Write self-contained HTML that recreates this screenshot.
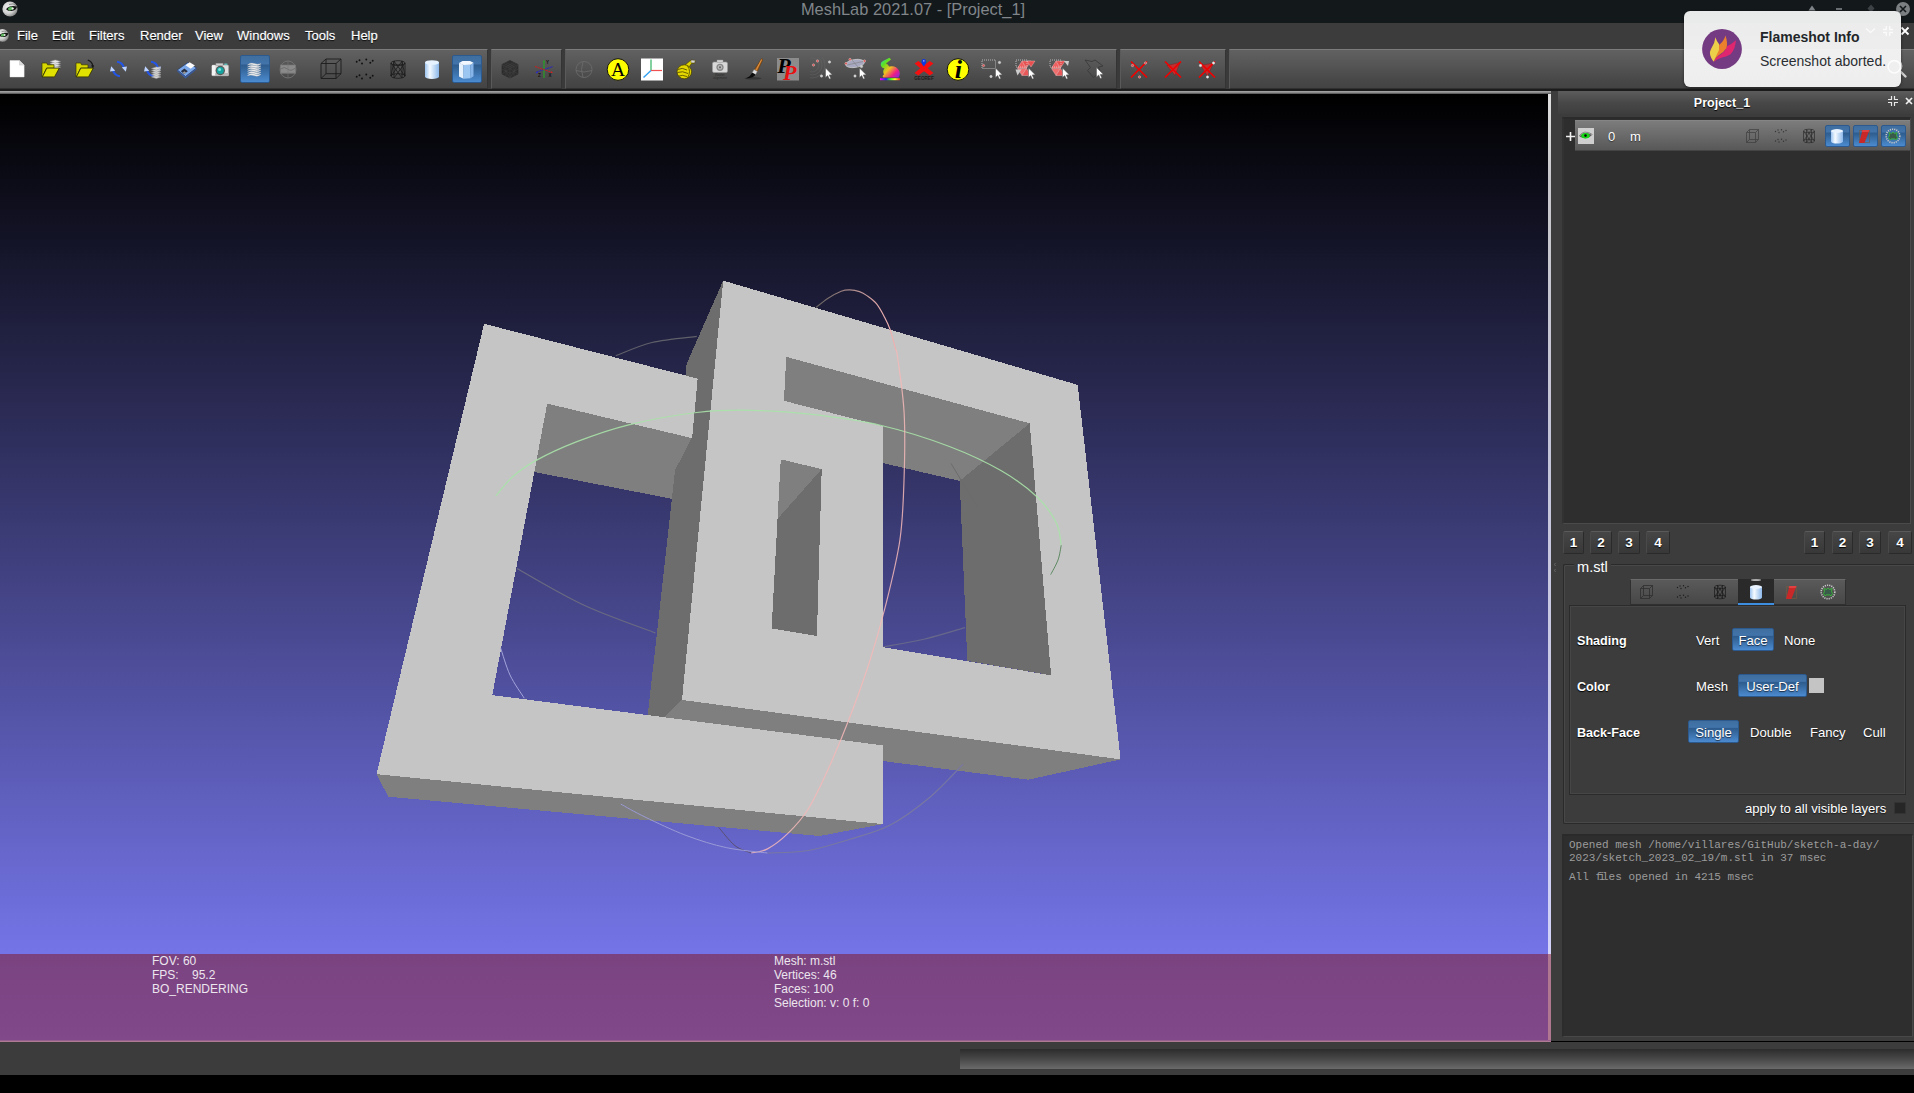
<!DOCTYPE html>
<html lang="en"><head><meta charset="utf-8"><title>MeshLab 2021.07 - [Project_1]</title>
<style>
*{box-sizing:border-box;margin:0;padding:0}
html,body{width:1914px;height:1093px;overflow:hidden;background:#000}
body{position:relative;font-family:"Liberation Sans",sans-serif;font-size:13px;color:#fff}
.abs{position:absolute}
#title{left:0;top:0;width:1914px;height:23px;background:#13181b}
#title .t{position:absolute;left:0;width:1826px;top:0;height:19px;line-height:19px;text-align:center;font-size:16.4px;color:#80868a}
#menu{left:0;top:23px;width:1914px;height:26px;background:#3c3c3c}
#menu span{position:absolute;top:0;height:25px;line-height:25px;font-size:13px;color:#fff;text-shadow:0 1px 1px #000, 0 0 1px #dfe6ee}
#tb{left:0;top:49px;width:1914px;height:40px;background:#3a3a3a}
.tbar{position:absolute;top:0;height:40px;background:linear-gradient(#616161 0,#555 40%,#494949 75%,#434343 100%);border:1px solid #303030;border-top-color:#7c7c7c;border-left-color:#5a5a5a;border-right-color:#343434}
.act{position:absolute;top:6px;width:30px;height:28px;border:1px solid #2c5a8e;border-radius:2px;background:linear-gradient(#3f6e9f 0,#4274ab 30%,#2e5c8e 35%,#376aa0 55%,#4b8bd0 100%)}
.ic{position:absolute;top:8px;width:24px;height:24px}
#l1{left:0;top:89px;width:1914px;height:2px;background:#1c1c1c}
#l2{left:0;top:91px;width:1551px;height:3px;background:linear-gradient(#aaa,#8a8a8a 50%,#4a4a4a)}
#gl{left:0;top:94px;width:1551px;height:948px;background:#000;overflow:hidden}
#dock{left:1551px;top:91px;width:363px;height:950px;background:#3c3c3c}
#bot{left:0;top:1042px;width:1914px;height:33px;background:#3c3c3c}
#sb{left:960px;top:1049px;width:954px;height:20px;background:linear-gradient(#2c2c2c,#484848 50%,#6a6a6a)}
</style></head><body>
<div id="title" class="abs"><div class="t">MeshLab 2021.07 - [Project_1]</div></div>
<div id="menu" class="abs">
<span style="left:17px">File</span><span style="left:52px">Edit</span><span style="left:89px">Filters</span><span style="left:140px">Render</span><span style="left:195px">View</span><span style="left:237px">Windows</span><span style="left:305px">Tools</span><span style="left:351px">Help</span>
</div>
<div id="tb" class="abs">
<div class="tbar" style="left:-1px;width:489px"></div>
<div class="tbar" style="left:491px;width:71px"></div>
<div class="tbar" style="left:565px;width:552px"></div>
<div class="tbar" style="left:1120px;width:106px"></div>
<div class="tbar" style="left:1229px;width:695px"></div>
<div class="act" style="left:240px"></div>
<div class="act" style="left:452px"></div>
<!--ICONS-S--><svg class="ic" style="left:5px" viewBox="0 0 24 24" ><path d="M5 3.500l9.500 0l4.600 4.600l0 11.800l-14.100 0z" fill="#fff" stroke="#e8e8e8" stroke-width=".5"/><path d="M14.500 3.500l0 4.600l4.600 0z" fill="#dcdcdc" stroke="#c4c4c4" stroke-width=".5"/></svg>
<svg class="ic" style="left:38px" viewBox="0 0 24 24" ><path d="M12 10.2l5.25 -1.6l5.25 1.6l-5.25 1.6z" fill="#e8e8e8" stroke="#9a9a9a" stroke-width=".5"/><path d="M12 8.3l5.25 -1.6l5.25 1.6l-5.25 1.6z" fill="#e8e8e8" stroke="#9a9a9a" stroke-width=".5"/><path d="M12 6.4l5.25 -1.6l5.25 1.6l-5.25 1.6z" fill="#e8e8e8" stroke="#9a9a9a" stroke-width=".5"/><path d="M12 4.5l5.25 -1.6l5.25 1.6l-5.25 1.6z" fill="#e8e8e8" stroke="#9a9a9a" stroke-width=".5"/><path d="M4 6l4.800 0l.7 1.800l6.500 0l0 3.400l-7.500 0l-4.100 8.700l-.4 0z" fill="#d8d800" stroke="#3a3a00" stroke-width=".7"/><path d="M8.800 11.100l12.500 0l-4.800 8.800l-12.100 0z" fill="#e2e200" stroke="#2a2a00" stroke-width=".8"/><path d="M5 19.600l11.300 0" stroke="#8a8a00" stroke-width=".8"/></svg>
<svg class="ic" style="left:72px" viewBox="0 0 24 24" ><path d="M4 6l4.800 0l.7 1.800l6.500 0l0 3.400l-7.500 0l-4.100 8.700l-.4 0z" fill="#d8d800" stroke="#3a3a00" stroke-width=".7"/><path d="M8.800 11.100l12.500 0l-4.800 8.800l-12.100 0z" fill="#e2e200" stroke="#2a2a00" stroke-width=".8"/><path d="M5 19.600l11.300 0" stroke="#8a8a00" stroke-width=".8"/><path d="M15.800 3.200q4.500 1.500 5 6" fill="none" stroke="#181818" stroke-width="1.300"/><path d="M19 8.500l3.200-.3l-1.200 3.300z" fill="#181818"/></svg>
<svg class="ic" style="left:106px" viewBox="0 0 24 24" ><path d="M11 4.800q5.500 .5 7.200 6.500" fill="none" stroke="#2456e6" stroke-width="2.100"/><path d="M15.800 10.200l5.200-.8l-1.200 5.400z" fill="#bcd2ff"/><path d="M14 19.300q-5.500-.5-7.200-6.500" fill="none" stroke="#2456e6" stroke-width="2.100"/><path d="M9.200 13.800l-5.200 .8l1.200-5.400z" fill="#bcd2ff"/></svg>
<svg class="ic" style="left:140px" viewBox="0 0 24 24" ><path d="M11 4.800q5.500 .5 7.200 6.500" fill="none" stroke="#2456e6" stroke-width="2.100"/><path d="M15.800 10.200l5.200-.8l-1.200 5.400z" fill="#bcd2ff"/><path d="M14 19.300q-5.500-.5-7.200-6.500" fill="none" stroke="#2456e6" stroke-width="2.100"/><path d="M9.200 13.800l-5.200 .8l1.200-5.400z" fill="#bcd2ff"/><path d="M11.5 19.9l4.75 -1.6l4.75 1.6l-4.75 1.6z" fill="#d4d4d4" stroke="#9a9a9a" stroke-width=".5"/><path d="M11.5 17.8l4.75 -1.6l4.75 1.6l-4.75 1.6z" fill="#d4d4d4" stroke="#9a9a9a" stroke-width=".5"/><path d="M11.5 15.7l4.75 -1.6l4.75 1.6l-4.75 1.6z" fill="#d4d4d4" stroke="#9a9a9a" stroke-width=".5"/><path d="M11.5 13.6l4.75 -1.6l4.75 1.6l-4.75 1.6z" fill="#d4d4d4" stroke="#9a9a9a" stroke-width=".5"/><path d="M11.5 11.5l4.75 -1.6l4.75 1.6l-4.75 1.6z" fill="#d4d4d4" stroke="#9a9a9a" stroke-width=".5"/></svg>
<svg class="ic" style="left:174px" viewBox="0 0 24 24" ><path d="M3.300 13l10.500-7.500l8.700 5.500l-11 8.500z" fill="#7aa8ea" stroke="#1c2c55" stroke-width=".6"/><path d="M11.500 19.500l11-8.500l0 1.600l-11 8.900l-8.200-7l0-1.500z" fill="#3a5a9a"/><path d="M11.500 8.300l4.200-3l5.200 3.300l-4.200 3.200z" fill="#fafafa"/><path d="M6.800 14.300l3.600-2.700l3.400 2.600l-3.600 2.900z" fill="#2a3040"/><path d="M8.600 15.700l1.800-1.400l1.700 1.300l-1.800 1.500z" fill="#9a9a9a"/></svg>
<svg class="ic" style="left:208px" viewBox="0 0 24 24" ><rect x="3.800" y="8" width="16.800" height="10.800" rx="1.200" fill="#e0e0e0" stroke="#9a9a9a" stroke-width=".6"/><rect x="3.800" y="16" width="16.800" height="2.800" fill="#b8b8b8"/><rect x="4" y="8.300" width="3.200" height="10" fill="#f4f4f4"/><rect x="8" y="6.300" width="7" height="2.200" fill="#d0d0d0" stroke="#9a9a9a" stroke-width=".5"/><rect x="16.300" y="6.500" width="3" height="1.500" fill="#6bb"/><circle cx="12.300" cy="13.500" r="4.700" fill="#5a5a5a"/><circle cx="12.300" cy="13.500" r="3.500" fill="#16a4a0"/><circle cx="11.600" cy="12.600" r="1.500" fill="#7fe0dc"/></svg>
<svg class="ic" style="left:242px" viewBox="0 0 24 24" ><path d="M5.500 18.5q3-2.800 6.500-1.500t7 .3q-3 2.800-6.500 1.500t-7-.3z" fill="#f0f0f0" stroke="#c4c4c4" stroke-width=".4"/><path d="M5.500 16.4q3-2.800 6.500-1.500t7 .3q-3 2.800-6.500 1.500t-7-.3z" fill="#f0f0f0" stroke="#c4c4c4" stroke-width=".4"/><path d="M5.500 14.3q3-2.800 6.500-1.500t7 .3q-3 2.800-6.500 1.500t-7-.3z" fill="#f0f0f0" stroke="#c4c4c4" stroke-width=".4"/><path d="M5.500 12.2q3-2.800 6.500-1.500t7 .3q-3 2.800-6.500 1.500t-7-.3z" fill="#f0f0f0" stroke="#c4c4c4" stroke-width=".4"/><path d="M5.500 10.1q3-2.800 6.500-1.500t7 .3q-3 2.800-6.500 1.500t-7-.3z" fill="#f0f0f0" stroke="#c4c4c4" stroke-width=".4"/><path d="M5.500 8.0q3-2.800 6.500-1.500t7 .3q-3 2.800-6.500 1.500t-7-.3z" fill="#f0f0f0" stroke="#c4c4c4" stroke-width=".4"/></svg>
<svg class="ic" style="left:276px" viewBox="0 0 24 24" ><ellipse cx="12" cy="12.5" rx="8" ry="8.5" fill="none" stroke="#777" stroke-width=".8"/><rect x="4.5" y="8" width="15" height="8" fill="#8a8a8a" stroke="#777" stroke-width=".6"/><path d="M4.5 12q4-3 7 0t8-1" fill="none" stroke="#6a6a6a" stroke-width=".8"/><path d="M12 4v17M4 16.5h16" stroke="#777" stroke-width=".6"/></svg>
<svg class="ic" style="left:318px" viewBox="0 0 24 24" ><path d="M3 6.500h15v15h-15zM8 2h15v14.700h-15zM3 6.500l5-4.500M18 6.500l5-4.500M3 21.500l5-4.800M18 21.500l5-4.800" fill="none" stroke="#1c1c1c" stroke-width=".9"/></svg>
<svg class="ic" style="left:352px" viewBox="0 0 24 24" ><circle cx="4.7" cy="4.8" r=".95" fill="#111"/><circle cx="7.5" cy="3.2" r=".95" fill="#111"/><circle cx="10" cy="6.5" r=".95" fill="#111"/><circle cx="14.3" cy="2.5" r=".95" fill="#111"/><circle cx="18.3" cy="5.8" r=".95" fill="#111"/><circle cx="20.7" cy="3.8" r=".95" fill="#111"/><circle cx="4.7" cy="19.8" r=".95" fill="#111"/><circle cx="7.5" cy="18.2" r=".95" fill="#111"/><circle cx="10" cy="21.5" r=".95" fill="#111"/><circle cx="14.3" cy="17.5" r=".95" fill="#111"/><circle cx="18.3" cy="20.8" r=".95" fill="#111"/><circle cx="20.7" cy="18.8" r=".95" fill="#111"/></svg>
<svg class="ic" style="left:386px" viewBox="0 0 24 24" ><g fill="none" stroke="#1a1a1a" stroke-width=".8"><ellipse cx="12" cy="6" rx="7" ry="2.3"/><ellipse cx="12" cy="19" rx="7" ry="2.3"/><path d="M5 6v13M19 6v13M8 4.2v16.8M16 4.2v16.8M5 6l11 15M19 6l-11 15M8 4.2l11 14.8M16 4.2l-11 14.8M8 8l8 0M5 19l3-15M19 19l-3-15"/></g></svg>
<svg class="ic" style="left:420px" viewBox="0 0 24 24" ><defs><linearGradient id="cy1" x1="0" x2="1"><stop offset="0" stop-color="#9cc4f0"/><stop offset=".35" stop-color="#f4faff"/><stop offset="1" stop-color="#8cb8ea"/></linearGradient></defs><path d="M5 5.5v14a7 2.4 0 0 0 14 0v-14z" fill="url(#cy1)"/><ellipse cx="12" cy="5.5" rx="7" ry="2.3" fill="#e6f2ff"/></svg>
<svg class="ic" style="left:454px" viewBox="0 0 24 24" ><path d="M5 6l0 13.5l4.5 2.3l0-14z" fill="#e4f0fc"/><path d="M9.5 7.8l0 14l7 -.6l0-13.5z" fill="#9cc6f2"/><path d="M16.5 7.7l0 13.5l3-2l0-13.4z" fill="#86b4e8"/><path d="M5 6l3.5-2l7.5 0l3.5 1.8l-3 2l-7 .2z" fill="#f2f8ff"/></svg>
<svg class="ic" style="left:497.7px" viewBox="0 0 24 24" ><path d="M12 3.500l8 4v9.500l-8 4l-8-4v-9.500z" fill="#2e2e2e" stroke="#262626" stroke-width=".6"/><path d="M4 7.500l8 4l8-4M12 11.500v9.500M4 12.200l8 4l8-4M8 5.500l8 4v9.500M16 5.500l-8 4v9.500M6 6.500l8 4M18 6.500l-8 4M4 7.500l8 13.500l8-13.500M4 17l8-5.500l8 5.500" fill="none" stroke="#4a4a4a" stroke-width=".4"/></svg>
<svg class="ic" style="left:531.7px" viewBox="0 0 24 24" ><path d="M12 3.500v17.500" stroke="#2a9a2a" stroke-width="1.300"/><path d="M12 3l-1.200 2.200h2.400z" fill="#2a9a2a"/><path d="M4.500 15l16.500-5.500" stroke="#2020c8" stroke-width=".9" stroke-dasharray="2.200 .6"/><path d="M3 9.500l17 6" stroke="#d81818" stroke-width=".9" stroke-dasharray="2.200 .6"/><path d="M21 15.800l-2.400 .3l.8-1.800z" fill="#e02020"/><path d="M3.500 15.300l2.400-.3l-.8 1.800z" fill="#2a2ad8"/><text x="14" y="6.500" font-size="4.500" font-weight="bold" fill="#111" font-family="Liberation Sans, sans-serif">Y</text><text x="6" y="19.500" font-size="4.500" font-weight="bold" fill="#111" font-family="Liberation Sans, sans-serif">Z</text><text x="16.500" y="19.500" font-size="4.500" font-weight="bold" fill="#111" font-family="Liberation Sans, sans-serif">X</text></svg>
<svg class="ic" style="left:572px" viewBox="0 0 24 24" ><g fill="none" stroke="#6a6a6a" stroke-width=".9"><circle cx="12" cy="12.5" r="8"/><path d="M4 13.5q8 3 16 0M11 4.5q-3 8 0 16"/></g></svg>
<svg class="ic" style="left:606px" viewBox="0 0 24 24" ><circle cx="12" cy="12.5" r="10.8" fill="#ffff00" stroke="#111" stroke-width="1"/><text x="12" y="19" text-anchor="middle" font-family="Liberation Serif, serif" font-size="19.500" fill="#000">A</text></svg>
<svg class="ic" style="left:640px" viewBox="0 0 24 24" ><rect x="1" y="1.5" width="22" height="22" fill="#fff"/><path d="M11 13.5v-11" stroke="#30b060" stroke-width="1.2"/><path d="M11 13.5h11" stroke="#f05050" stroke-width="1.2"/><path d="M11 13.5l-7.5 7" stroke="#30a0f0" stroke-width="1.4"/></svg>
<svg class="ic" style="left:674px" viewBox="0 0 24 24" ><path d="M10.500 8.500l6.500-5.500l4.500 .5l-1.200 3l-2.800 0l-3 4.500z" fill="#e2d400" stroke="#4a4200" stroke-width=".7"/><path d="M17.300 3l4 .5l-1 2.400l-3.500-.3z" fill="#d8d8d8" stroke="#555" stroke-width=".4"/><ellipse cx="10.300" cy="14.800" rx="7.300" ry="7" fill="#e4d600" stroke="#4a4200" stroke-width=".8"/><path d="M4 12.500q4-2.500 9 .5M3.500 15.500q5-2 10.500 1M5 19q3-1.500 8 .5M13.500 9q4 5 0 12" fill="none" stroke="#4a4200" stroke-width=".8"/></svg>
<svg class="ic" style="left:708px" viewBox="0 0 24 24" ><rect x="4.5" y="5" width="15" height="10.5" rx="1.5" fill="#d8d8d8" stroke="#999" stroke-width=".6"/><rect x="9" y="3" width="6" height="2.4" fill="#d0d0d0" stroke="#999" stroke-width=".4"/><circle cx="12" cy="10.3" r="3.6" fill="#888"/><circle cx="12" cy="10.3" r="2.2" fill="#bbb"/><circle cx="12" cy="10.3" r="1.1" fill="#666"/><text x="12" y="18.6" text-anchor="middle" font-size="3.2" fill="#2a2a2a" font-family="Liberation Sans, sans-serif">Raster</text><text x="12" y="22" text-anchor="middle" font-size="3.2" fill="#2a2a2a" font-family="Liberation Sans, sans-serif">alignment</text></svg>
<svg class="ic" style="left:742px" viewBox="0 0 24 24" ><ellipse cx="11" cy="21.300" rx="8.500" ry="1.300" fill="#222" opacity=".55"/><path d="M19.600 1.500q1.200 .3 1 1.500l-5.300 11.500l-3-1.600z" fill="#b86a1c" stroke="#5a3008" stroke-width=".5"/><path d="M19.600 2.500l-5.600 10.800" stroke="#e09a50" stroke-width=".8"/><path d="M12 12.600l3.300 1.800l-1.800 3.200l-3.300-1.800z" fill="#e0e0e0" stroke="#8a8a8a" stroke-width=".5"/><path d="M10.200 15.800l3.300 1.800q-1.500 3.500-9.500 4q4.500-2 6.200-5.800z" fill="#0c0c0c"/></svg>
<svg class="ic" style="left:776px" viewBox="0 0 24 24" ><rect x="1" y="1" width="22" height="22.500" fill="#8c8c8c"/><text x="1.200" y="15.700" font-family="Liberation Serif, serif" font-style="italic" font-weight="bold" font-size="22" fill="#000">P</text><text x="7" y="23.200" font-family="Liberation Serif, serif" font-style="italic" font-weight="bold" font-size="22" fill="#e81010">P</text></svg>
<svg class="ic" style="left:810px" viewBox="0 0 24 24" ><g fill="none" stroke="#666" stroke-width=".5"><circle cx="2" cy="8" r="7"/><circle cx="2" cy="8" r="10"/><circle cx="2" cy="8" r="13"/></g><circle cx="7.5" cy="4" r="1.2" fill="#e05050" stroke="#ddd" stroke-width=".4"/><circle cx="3.5" cy="8" r="1.2" fill="#e05050" stroke="#ddd" stroke-width=".4"/><circle cx="19.5" cy="5" r="1.2" fill="#ccc" stroke="#ddd" stroke-width=".4"/><circle cx="11.5" cy="19" r="1.2" fill="#ccc" stroke="#ddd" stroke-width=".4"/><path d="M15.5 11l0 9.5l2.2-2l1.6 3.6l1.5-.7l-1.6-3.5l3-.2z" fill="#fff" stroke="#555" stroke-width=".5"/></svg>
<svg class="ic" style="left:844px" viewBox="0 0 24 24" ><ellipse cx="11" cy="6.5" rx="9.5" ry="4" fill="#a8a8c0" stroke="#dcdcdc" stroke-width=".6" transform="rotate(-8 11 6.5)"/><path d="M3 8l16-3.5M8 3l6 7" stroke="#777" stroke-width=".5"/><circle cx="6" cy="2.5" r="1.2" fill="#e05050" stroke="#ddd" stroke-width=".4"/><circle cx="2" cy="6.5" r="1.2" fill="#e05050" stroke="#ddd" stroke-width=".4"/><circle cx="20.5" cy="4" r="1.2" fill="#e05050" stroke="#ddd" stroke-width=".4"/><circle cx="17.5" cy="9.5" r="1.2" fill="#ccc" stroke="#ddd" stroke-width=".4"/><circle cx="11" cy="19" r="1.2" fill="#ccc" stroke="#ddd" stroke-width=".4"/><path d="M15.5 11l0 9.5l2.2-2l1.6 3.6l1.5-.7l-1.6-3.5l3-.2z" fill="#fff" stroke="#555" stroke-width=".5"/></svg>
<svg class="ic" style="left:878px" viewBox="0 0 24 24" ><defs><linearGradient id="rb" x1="0" x2="1" y1="0" y2="1"><stop offset="0" stop-color="#20e0c0"/><stop offset=".25" stop-color="#60e020"/><stop offset=".5" stop-color="#f0c020"/><stop offset=".75" stop-color="#f02080"/><stop offset="1" stop-color="#8020f0"/></linearGradient><linearGradient id="rb2" x1="0" x2="1"><stop offset="0" stop-color="#f0f"/><stop offset=".3" stop-color="#22f"/><stop offset=".5" stop-color="#2f2"/><stop offset=".75" stop-color="#ff2"/><stop offset="1" stop-color="#f22"/></linearGradient></defs><path d="M3 9q-1-3.500 2-5l6.500-3.200l1.500 1.800l-5 4q2.500 1 3 3q7-1.500 10 4q1.800 3.500-.5 6.900l-15 0q-2-1.200 .5-3q-1.800-3.500 .5-6q-2.500-.5-3.500-2.500z" fill="url(#rb)"/><rect x="2" y="21.200" width="20" height="2" fill="url(#rb2)"/></svg>
<svg class="ic" style="left:912px" viewBox="0 0 24 24" ><path d="M2.500 6.500l3.800-2.500l5.700 4.300l5.700-4.300l3.800 2.500l-5.800 4.800l5.800 4.700l-3.800 2.500l-5.700-4.300l-5.700 4.300l-3.800-2.500l5.800-4.700z" fill="#f41010"/><path d="M11.800 9.500q-2.800-3.500-2.300-5.300a2.300 2.300 0 0 1 4.600 0q.5 1.800-2.300 5.300z" fill="#1038e0"/><circle cx="11.800" cy="3.900" r=".8" fill="#9ab0ff"/><text x="12" y="23.300" text-anchor="middle" font-size="5.600" font-weight="bold" fill="#1c1c1c" font-family="Liberation Sans, sans-serif" textLength="19.500" lengthAdjust="spacingAndGlyphs">GEOREF</text></svg>
<svg class="ic" style="left:946px" viewBox="0 0 24 24" ><circle cx="12" cy="12.5" r="10.8" fill="#ffff00" stroke="#111" stroke-width="1"/><text x="12.300" y="20.800" text-anchor="middle" font-family="Liberation Serif, serif" font-style="italic" font-weight="bold" font-size="26" fill="#000">i</text></svg>
<svg class="ic" style="left:980px" viewBox="0 0 24 24" ><rect x="2" y="3" width="13.500" height="8.500" fill="none" stroke="#ccc" stroke-width=".8" stroke-dasharray="1 1"/><circle cx="3.5" cy="8.5" r="1.2" fill="#e05050" stroke="#ddd" stroke-width=".4"/><circle cx="19.5" cy="5.5" r="1.2" fill="#ccc" stroke="#ddd" stroke-width=".4"/><circle cx="11" cy="19.5" r="1.2" fill="#ccc" stroke="#ddd" stroke-width=".4"/><path d="M15.5 11l0 9.5l2.2-2l1.6 3.6l1.5-.7l-1.6-3.5l3-.2z" fill="#fff" stroke="#555" stroke-width=".5"/></svg>
<svg class="ic" style="left:1014px" viewBox="0 0 24 24" ><path d="M8 4l4.500 7h-9z" fill="#f06060" stroke="#f8c0c0" stroke-width=".4"/><path d="M12.500 11l4.500-7l-9 0z" fill="#e85050" stroke="#f8c0c0" stroke-width=".4"/><path d="M3.500 11.500h9l-4.500 7z" fill="#f07070" stroke="#f8c0c0" stroke-width=".4"/><path d="M12.500 11.500l4.500 7h-9z" fill="#e85858" stroke="#f8c0c0" stroke-width=".4"/><path d="M13 4h8l-4 6z" fill="#e85050" stroke="#f8c0c0" stroke-width=".4"/><path d="M3.500 18.500l4-6l-6 0z" fill="#ccc"/><rect x="2" y="3" width="11" height="7" fill="none" stroke="#ddd" stroke-width=".7" stroke-dasharray="1 1"/><path d="M14.5 11l0 9.5l2.2-2l1.6 3.6l1.5-.7l-1.6-3.5l3-.2z" fill="#fff" stroke="#555" stroke-width=".5"/></svg>
<svg class="ic" style="left:1048px" viewBox="0 0 24 24" ><path d="M8 4l4.500 7h-9z" fill="#f06060" stroke="#f8c0c0" stroke-width=".4"/><path d="M12.500 11l4.500-7l-9 0z" fill="#e85050" stroke="#f8c0c0" stroke-width=".4"/><path d="M3.500 11.500h9l-4.500 7z" fill="#f07070" stroke="#f8c0c0" stroke-width=".4"/><path d="M12.500 11.500l4.500 7h-9z" fill="#e85858" stroke="#f8c0c0" stroke-width=".4"/><path d="M16 4h5l-1 5z" fill="#ccc"/><rect x="2" y="3" width="11" height="7" fill="none" stroke="#ddd" stroke-width=".7" stroke-dasharray="1 1"/><path d="M14.5 11l0 9.5l2.2-2l1.6 3.6l1.5-.7l-1.6-3.5l3-.2z" fill="#fff" stroke="#555" stroke-width=".5"/></svg>
<svg class="ic" style="left:1082px" viewBox="0 0 24 24" ><path d="M3 3l7 1.500l3-1.500l8 6l-4.500 1l2 5l-7 5.500l-6-7l3-3z" fill="none" stroke="#3a3a3a" stroke-width=".9"/><path d="M14.5 10.5l0 9.5l2.2-2l1.6 3.6l1.5-.7l-1.6-3.5l3-.2z" fill="#fff" stroke="#555" stroke-width=".5"/></svg>
<svg class="ic" style="left:1127px" viewBox="0 0 24 24" ><path d="M5.500 8.500l13-2.500l-6 13z" fill="none" stroke="#5a5a5a" stroke-width=".7"/><path d="M4 4.500l16 16M20 4.500l-16 16" stroke="#f00000" stroke-width="1.700"/><circle cx="5.5" cy="8.5" r="1.2" fill="#e05050" stroke="#ddd" stroke-width=".4"/><circle cx="18.5" cy="6" r="1.2" fill="#e05050" stroke="#ddd" stroke-width=".4"/><circle cx="12.5" cy="20" r="1.2" fill="#e05050" stroke="#ddd" stroke-width=".4"/></svg>
<svg class="ic" style="left:1161px" viewBox="0 0 24 24" ><path d="M6 8.500l13-3l-5 13z" fill="#c03030" stroke="#802020" stroke-width=".5"/><path d="M4 4.500l16 16M20 4.500l-16 16" stroke="#f00000" stroke-width="1.700"/></svg>
<svg class="ic" style="left:1195px" viewBox="0 0 24 24" ><path d="M5.500 8.500l13-2.500l-6 13z" fill="#c03030" stroke="#802020" stroke-width=".5"/><path d="M4 4.500l16 16M20 4.500l-16 16" stroke="#f00000" stroke-width="1.700"/><circle cx="5.5" cy="8.5" r="1.2" fill="#e8e8e8" stroke="#ddd" stroke-width=".4"/><circle cx="18.5" cy="6" r="1.2" fill="#e8e8e8" stroke="#ddd" stroke-width=".4"/><circle cx="12.5" cy="20" r="1.2" fill="#e8e8e8" stroke="#ddd" stroke-width=".4"/></svg>
<svg class="ic" style="left:1886px" viewBox="0 0 24 24" ><circle cx="9" cy="9" r="6.500" fill="none" stroke="#ddd" stroke-width="1.800"/><path d="M14 14l5.500 5.500" stroke="#d0d0d0" stroke-width="2.400" stroke-linecap="round"/></svg>
<!--ICONS-E-->
</div>
<div id="l1" class="abs"></div><div id="l2" class="abs"></div>
<div id="gl" class="abs">
<svg class="abs" style="left:0;top:0" width="1551" height="948" viewBox="0 94 1551 948" shape-rendering="crispEdges">
<defs>
<linearGradient id="bg" x1="0" y1="94" x2="0" y2="1041" gradientUnits="userSpaceOnUse"><stop offset="0" stop-color="#000"/><stop offset="1" stop-color="#8080ff"/></linearGradient>
<linearGradient id="pu" x1="0" y1="954" x2="0" y2="1041" gradientUnits="userSpaceOnUse"><stop offset="0" stop-color="#7a4380"/><stop offset="1" stop-color="#81488a"/></linearGradient>
</defs>
<rect x="0" y="94" width="1551" height="948" fill="url(#bg)"/>
<!-- back trackball arcs -->
<g fill="none" stroke-width="1" shape-rendering="auto">
<path d="M615.8 355.8C621.8 353.6 638.5 345.7 652.0 342.5C665.5 339.3 689.3 337.4 696.8 336.4" stroke="#60606a" stroke-width="1.2"/>
<path d="M516.9 568.5C528.1 574.6 561.0 594.5 584.1 605.2C607.2 615.9 643.5 628.3 655.4 632.9" stroke="#6a6a82" stroke-width="1.2"/>
<path d="M883.6 646.8C890.5 645.5 911.4 642.2 925.0 639.0C938.6 635.8 958.4 629.5 965.1 627.6" stroke="#68688a" stroke-width="1.2"/>
</g>
<!-- right frame: underside of top bar, inner right face -->
<polygon points="786.3,356.9 1029.7,423.3 959.7,480.9 746,431.4" fill="#7f7f7f"/>
<polygon points="1029.7,423.3 1051.1,675.3 967.3,660.8 959.7,480.9" fill="#6d6d6d"/>
<!-- left frame inner faces + front face -->
<polygon points="723.2,280.6 686.7,363.7 684.5,385 715,385" fill="#6d6d6d"/>
<polygon points="547.2,403.6 821.7,469.1 777.2,519.3 534.3,472" fill="#7f7f7f"/>
<polygon points="779,457 822,469 817,636 770,629" fill="#7f7f7f"/>
<polygon points="821.7,469.1 814,736.5 760,757.6 766.1,531.9" fill="#6d6d6d"/>
<path fill-rule="evenodd" fill="#c5c5c5" d="M484.1 323.8L882.9 426.2L882.8 824.1L376.5 774.2ZM547.2 403.6L821.7 469.1L814 736.5L492.3 695.1Z"/>
<polygon points="376.5,774.2 882.8,824.1 819.6,836 388.3,796.7" fill="#7f7f7f"/>
<!-- right frame side face (visible part) -->
<polygon points="723.2,280.6 697.7,378.6 692.2,437.1 675.1,470 647.6,716.5 663.1,718.5 682,699.9" fill="#6d6d6d"/>
<!-- right frame bottom underside -->
<polygon points="682,699.9 1120.6,759.4 1028.3,779.7 882.8,761 882.8,747 663.1,718.5" fill="#7f7f7f"/>
<polygon points="492.3,695.1 882.8,745.35 882.8,762 492.3,712" fill="#c5c5c5"/>
<!-- right frame front face -->
<path fill-rule="evenodd" fill="#c5c5c5" d="M723.2 280.6L1077.7 384.9L1120.6 759.4L682 699.9ZM786.3 356.9L1029.7 423.3L1051.1 675.3L771.6 628.4Z"/>
<!-- front trackball arcs -->
<g fill="none" stroke-width="1" shape-rendering="auto">
<path d="M495.9 495.8C498.6 492.7 505.6 483.1 512.1 477.3C518.6 471.5 524.0 467.0 534.8 461.1C545.6 455.2 561.2 447.8 576.9 441.7C592.5 435.6 608.7 429.7 628.7 424.8C648.7 419.9 676.3 414.9 696.8 412.5C717.3 410.1 732.9 410.0 751.8 410.3C770.7 410.6 788.5 411.7 810.1 414.2C831.7 416.7 858.2 420.1 881.4 425.5C904.6 430.9 929.4 438.9 949.4 446.5C969.4 454.1 986.7 462.4 1001.3 470.8C1015.9 479.2 1027.7 488.1 1036.9 496.8C1046.1 505.5 1052.2 514.6 1056.3 522.7C1060.3 530.8 1060.4 541.5 1061.2 545.3" stroke="#a8e2a8" stroke-width="1.25" stroke-opacity=".9"/>
<path d="M1061.2 545.3C1060.7 547.8 1059.8 555.1 1058.0 560.0C1056.2 564.9 1051.9 572.2 1050.7 574.6" stroke="#5e8a62"/>
<linearGradient id="pg" gradientUnits="userSpaceOnUse" x1="816" y1="0" x2="886" y2="0"><stop offset="0" stop-color="#66625e"/><stop offset=".45" stop-color="#a08484"/><stop offset="1" stop-color="#eeb0b0"/></linearGradient>
<path d="M816.0 307.5C818.0 305.9 823.9 300.9 828.1 298.2C832.3 295.5 837.6 292.6 841.2 291.2C844.9 289.8 847.0 289.8 850.0 289.9C853.0 290.0 856.7 290.7 859.5 291.6C862.3 292.6 864.1 293.6 866.9 295.6C869.7 297.6 873.5 300.1 876.4 303.7C879.3 307.2 882.1 312.5 884.4 316.9C886.7 321.3 888.4 324.5 890.3 330.0C892.2 335.5 894.9 346.7 895.8 350.0" stroke="url(#pg)" stroke-width="1.15"/>
<path d="M895.8 350.0C896.1 351.2 896.2 347.1 897.6 357.5C899.0 367.9 903.0 392.5 904.1 412.5C905.2 432.5 904.8 456.1 904.1 477.3C903.4 498.6 903.0 518.7 899.9 540.0C896.8 561.3 890.8 584.8 885.7 605.2C880.6 625.6 875.5 643.2 869.4 662.2C863.3 681.2 855.8 701.6 849.0 719.3C842.2 737.0 835.4 753.2 828.6 768.2C821.8 783.2 815.0 798.1 808.2 809.0C801.4 819.9 794.7 826.8 787.9 833.4C781.1 840.0 773.6 845.6 767.5 848.9C761.4 852.2 753.9 852.3 751.2 853.0" stroke="#f4b8b8" stroke-width="1.2" stroke-opacity=".85"/>
<path d="M751.2 853.0C748.5 851.8 740.3 849.9 734.9 845.6C729.5 841.3 721.3 830.3 718.6 827.3" stroke="#5a5070"/>
<path d="M951.0 463.4C955.3 470.6 972.7 499.3 977.0 506.5" stroke="#6c6c6c"/>
<path d="M500.6 648.0C502.2 652.5 506.1 666.6 510.0 675.0C513.9 683.4 521.8 694.2 524.2 698.1" stroke="#a4a4dc"/>
<path d="M620.8 804.1C624.9 806.3 634.3 811.9 645.2 817.1C656.1 822.3 672.4 830.3 686.0 835.4C699.6 840.5 713.1 844.8 726.7 847.7C740.3 850.6 760.7 852.1 767.5 853.0" stroke="#9a9ad6"/>
<path d="M767.5 853.0C774.3 852.6 794.6 852.8 808.2 850.5C821.8 848.2 835.4 843.7 849.0 839.5C862.6 835.3 876.2 832.4 889.8 825.3C903.4 818.2 918.3 806.9 930.5 796.7C942.7 786.5 957.7 769.5 963.1 764.1" stroke="#7878a2" stroke-width="1.2"/>
</g>
<rect x="0" y="954" width="1551" height="88" fill="url(#pu)"/>
<linearGradient id="rb0" x1="0" y1="94" x2="0" y2="954" gradientUnits="userSpaceOnUse"><stop offset="0" stop-color="#e0e0e0"/><stop offset=".1" stop-color="#c8c8cc"/><stop offset=".4" stop-color="#c4c4d8"/><stop offset="1" stop-color="#d2d2fa"/></linearGradient><rect x="1548" y="94" width="3" height="860" fill="url(#rb0)"/>
<rect x="1548" y="954" width="3" height="88" fill="#b07890"/>
<rect x="0" y="1040" width="1551" height="1" fill="#96608c"/><rect x="0" y="1041" width="1551" height="1" fill="#b07a94"/>
<g font-family="Liberation Sans, sans-serif" font-size="12" fill="#ece6ee" shape-rendering="auto">
<text x="152" y="964.5">FOV: 60</text><text x="152" y="978.5" xml:space="preserve">FPS:    95.2</text><text x="152" y="992.5">BO_RENDERING</text>
<text x="774" y="964.5">Mesh: m.stl</text><text x="774" y="978.5">Vertices: 46</text><text x="774" y="992.5">Faces: 100</text><text x="774" y="1006.5">Selection: v: 0 f: 0</text>
</g>
</svg>

</div>
<div id="dock" class="abs">
<style>
#dock .ttl{position:absolute;left:7px;top:-3px;width:356px;height:23px;background:linear-gradient(#5c5c5c,#484848 50%,#3e3e3e);text-align:center;font-weight:bold;font-size:12.5px;line-height:25px;text-shadow:0 1px 1px #000}
#tree{position:absolute;left:11px;top:23px;width:349px;height:407px;background:#2e2e2e;border:1px solid #4a4a4a;border-top:2px solid #2b2b2b;border-left:2px solid #323232}
#row{position:absolute;left:24px;top:26px;width:335px;height:31px;background:linear-gradient(#7c7c7c,#6a6a6a 50%,#585858);border-top:1px solid #858585;border-bottom:1px solid #444}
.sbtn{position:absolute;top:31px;width:25px;height:22px;border:1px solid #2c5a8e;border-radius:2px;background:linear-gradient(#3f6e9f 0,#4274ab 30%,#2e5c8e 35%,#376aa0 55%,#4b8bd0 100%)}
.nb{position:absolute;top:437px;height:23px;background:linear-gradient(#464646,#383838);border:1px solid #2a2a2a;border-top-color:#5a5a5a;border-left-color:#4a4a4a;border-radius:2px;font-weight:bold;font-size:13.5px;line-height:21px;text-align:center;text-shadow:0 1px 1px #000}
#grp{position:absolute;left:12px;top:470px;width:352px;height:260px;border:1px solid #2a2a2a;border-right:0;border-radius:2px 0 0 2px;box-shadow:inset 1px 1px 0 0 #484848,inset 0 -1px 0 0 #484848}
#grpl{position:absolute;left:23px;top:465px;padding:0 3px;background:#3c3c3c;font-size:14.6px;line-height:16px}
#tabs{position:absolute;left:79px;top:485px;width:216px;height:26px;background:linear-gradient(#5a5a5a,#474747);border:1px solid #303030;border-top-color:#6a6a6a}
#tabsel{position:absolute;left:187px;top:485px;width:36px;height:26px;background:#2a2a2a;border-bottom:2px solid #3d8de0}
#frm{position:absolute;left:18px;top:511px;width:337px;height:190px;border:1px solid #2b2b2b;box-shadow:inset 0 0 0 1px #464646;background:#3c3c3c}
.lb{position:absolute;margin-top:1px;font-weight:bold;font-size:12.6px;line-height:16px;text-shadow:0 1px 1px #000}
.op{position:absolute;margin-top:1px;font-size:13.1px;line-height:16px;text-shadow:0 1px 1px #1a1a1a}
.ob{position:absolute;height:23px;padding-top:1px;border:1px solid #2c5a8e;border-radius:2px;background:linear-gradient(#3f6e9f 0,#4274ab 30%,#2e5c8e 35%,#376aa0 55%,#4b8bd0 100%);font-size:13.1px;line-height:21px;text-align:center;text-shadow:0 1px 1px #1a2a40}
#log{position:absolute;left:11px;top:740px;width:351px;height:203px;background:#2e2e2e;border:1px solid #484848;border-top:2px solid #2a2a2a;border-left:2px solid #2c2c2c;font-family:"Liberation Mono",monospace;font-size:11px;line-height:13px;color:#9c9c9c;padding:3px 0 0 5px;white-space:pre}
</style>
<div class="abs" style="left:0;top:3px;width:363px;height:947px"><div class="ttl"><span style="display:block;width:328px">Project_1</span></div>
<div id="tree"></div>
<div id="row"></div>
<div class="sbtn" style="left:274px"></div><div class="sbtn" style="left:302px"></div><div class="sbtn" style="left:330px"></div>
<div class="abs" style="left:57px;top:35px;font-size:13px;line-height:16px;text-shadow:0 1px 1px #333">0</div>
<div class="abs" style="left:79px;top:35px;font-size:13px;line-height:16px;text-shadow:0 1px 1px #333">m</div>
<div class="nb" style="left:12px;width:21px">1</div><div class="nb" style="left:39px;width:22px">2</div><div class="nb" style="left:67px;width:22px">3</div><div class="nb" style="left:95px;width:24px">4</div>
<div class="nb" style="left:253px;width:21px">1</div><div class="nb" style="left:281px;width:21px">2</div><div class="nb" style="left:308px;width:22px">3</div><div class="nb" style="left:337px;width:24px">4</div>
<div id="grp"></div><div id="grpl">m.stl</div>
<div id="tabs"></div><div id="tabsel"></div><div class="abs" style="left:200px;top:485px;width:10px;height:1.5px;border-radius:50%;background:#d0d0d0;opacity:.8"></div>
<div id="frm"></div>
<div class="lb" style="left:26px;top:538px">Shading</div>
<div class="op" style="left:145px;top:538px">Vert</div><div class="ob" style="left:181px;top:534px;width:42px">Face</div><div class="op" style="left:233px;top:538px">None</div>
<div class="lb" style="left:26px;top:584px">Color</div>
<div class="op" style="left:145px;top:584px">Mesh</div><div class="ob" style="left:187px;top:580px;width:69px">User-Def</div>
<div class="abs" style="left:258px;top:584px;width:15px;height:15px;background:#c4c4c4"></div>
<div class="lb" style="left:26px;top:630px">Back-Face</div>
<div class="ob" style="left:137px;top:626px;width:51px">Single</div><div class="op" style="left:199px;top:630px">Double</div><div class="op" style="left:259px;top:630px">Fancy</div><div class="op" style="left:312px;top:630px">Cull</div>
<div class="op" style="left:194px;top:706px">apply to all visible layers</div>
<div class="abs" style="left:342.5px;top:707.5px;width:12px;height:12px;background:#262626;border:1px solid #333"></div>
<div id="log">Opened mesh /home/villares/GitHub/sketch-a-day/
2023/sketch_2023_02_19/m.stl in 37 msec
<span style="display:block;height:6px"></span>All <span style="letter-spacing:-3.3px">fi</span>les opened in 4215 msec</div>
<!--DI-S--><svg class="abs" style="left:193.6px;top:34.0px;opacity:0.8" width="16" height="16" viewBox="0 0 16 16"><path d="M1.500 4.500h9v10h-9zM4.500 1.500h9v10h-9zM1.500 4.500l3-3M10.500 4.500l3-3M1.500 14.500l3-3M10.500 14.500l3-3" fill="none" stroke="#3a3a3a" stroke-width=".8"/></svg>
<svg class="abs" style="left:221.7px;top:34.0px;opacity:0.8" width="16" height="16" viewBox="0 0 16 16"><circle cx="2.5" cy="3.5" r=".7" fill="#2a2a2a"/><circle cx="5" cy="2" r=".7" fill="#2a2a2a"/><circle cx="8.5" cy="1.8" r=".7" fill="#2a2a2a"/><circle cx="10.5" cy="3.8" r=".7" fill="#2a2a2a"/><circle cx="13" cy="2.5" r=".7" fill="#2a2a2a"/><circle cx="6" cy="4.5" r=".7" fill="#2a2a2a"/><circle cx="2.5" cy="13" r=".7" fill="#2a2a2a"/><circle cx="5" cy="11.5" r=".7" fill="#2a2a2a"/><circle cx="8.5" cy="11.3" r=".7" fill="#2a2a2a"/><circle cx="10.5" cy="13.3" r=".7" fill="#2a2a2a"/><circle cx="13" cy="12" r=".7" fill="#2a2a2a"/><circle cx="6" cy="14" r=".7" fill="#2a2a2a"/></svg>
<svg class="abs" style="left:250.0px;top:34.0px;opacity:0.8" width="16" height="16" viewBox="0 0 16 16"><g fill="none" stroke="#1e1e1e" stroke-width=".7"><ellipse cx="8" cy="3" rx="5.500" ry="1.800"/><ellipse cx="8" cy="13" rx="5.500" ry="1.800"/><path d="M2.500 3v10M13.500 3v10M5.500 1.500v13M10.500 1.500v13M2.500 3l8 11.500M13.500 3l-8 11.500M5.500 1.500l8 11.500M10.500 1.500l-8 11.500"/></g></svg>
<svg class="abs" style="left:278.0px;top:34.0px;opacity:1" width="16" height="16" viewBox="0 0 16 16"><defs><linearGradient id="dca" x1="0" x2="1"><stop offset="0" stop-color="#9cc4f0"/><stop offset=".35" stop-color="#f6fbff"/><stop offset="1" stop-color="#8cb8ea"/></linearGradient></defs><path d="M2 3v10.500a6 2 0 0 0 12 0v-10.500z" fill="url(#dca)"/><ellipse cx="8" cy="3" rx="6" ry="1.900" fill="#e8f3ff"/></svg>
<svg class="abs" style="left:306.0px;top:34.0px;opacity:1" width="16" height="16" viewBox="0 0 16 16"><path d="M2.500 2.500h10v12h-10z" fill="none" stroke="#7a5a3a" stroke-width=".6"/><path d="M5.500 2l7 0l-5 13l-5.500 0z" fill="#c82828"/><path d="M5.500 2l7 0l-1 2l-7 0z" fill="#e04040"/></svg>
<svg class="abs" style="left:334.0px;top:34.0px;opacity:1" width="16" height="16" viewBox="0 0 16 16"><circle cx="8" cy="8" r="6.800" fill="none" stroke="#c8c8c8" stroke-width="1.600" stroke-dasharray="1.200 1"/><path d="M4 4.500l2.500 1l1.500-1.500l1.500 1.500l2.500-1l-.5 3l1 2l-1.500 2.500l-2-1.500l-1 .8l-1-.8l-2 1.500l-1.500-2.500l1-2z" fill="#3a5a4a" stroke="#3aba3a" stroke-width=".9"/></svg>
<div class="abs" style="left:27px;top:34px;width:16px;height:16px;background:#cfcfcf"></div><svg class="abs" style="left:27px;top:34px" width="16" height="16" viewBox="0 0 16 16"><path d="M1.500 8.500q5-6 12.500-1.500q-5 5.500-12.500 1.500z" fill="#555"/><ellipse cx="7.500" cy="7.800" rx="4.200" ry="2.700" fill="#18d818"/><circle cx="7.500" cy="7.600" r="1.300" fill="#0a0a0a"/><path d="M1 8q5-7 13.500-1.500" fill="none" stroke="#777" stroke-width=".8"/></svg>
<svg class="abs" style="left:14px;top:37px" width="11" height="11" viewBox="0 0 11 11"><path d="M5.500 1v9M1 5.500h9" stroke="#f0f0f0" stroke-width="1.600"/></svg>
<svg class="abs" style="left:88.3px;top:490.0px;opacity:1" width="16" height="16" viewBox="0 0 16 16"><path d="M1.500 4.500h9v10h-9zM4.500 1.500h9v10h-9zM1.500 4.500l3-3M10.500 4.500l3-3M1.500 14.500l3-3M10.500 14.500l3-3" fill="none" stroke="#2e2e2e" stroke-width=".8"/></svg>
<svg class="abs" style="left:124.3px;top:490.0px;opacity:1" width="16" height="16" viewBox="0 0 16 16"><circle cx="2.5" cy="3.5" r=".7" fill="#1c1c1c"/><circle cx="5" cy="2" r=".7" fill="#1c1c1c"/><circle cx="8.5" cy="1.8" r=".7" fill="#1c1c1c"/><circle cx="10.5" cy="3.8" r=".7" fill="#1c1c1c"/><circle cx="13" cy="2.5" r=".7" fill="#1c1c1c"/><circle cx="6" cy="4.5" r=".7" fill="#1c1c1c"/><circle cx="2.5" cy="13" r=".7" fill="#1c1c1c"/><circle cx="5" cy="11.5" r=".7" fill="#1c1c1c"/><circle cx="8.5" cy="11.3" r=".7" fill="#1c1c1c"/><circle cx="10.5" cy="13.3" r=".7" fill="#1c1c1c"/><circle cx="13" cy="12" r=".7" fill="#1c1c1c"/><circle cx="6" cy="14" r=".7" fill="#1c1c1c"/></svg>
<svg class="abs" style="left:160.9px;top:490.0px;opacity:1" width="16" height="16" viewBox="0 0 16 16"><g fill="none" stroke="#1a1a1a" stroke-width=".7"><ellipse cx="8" cy="3" rx="5.500" ry="1.800"/><ellipse cx="8" cy="13" rx="5.500" ry="1.800"/><path d="M2.500 3v10M13.500 3v10M5.500 1.500v13M10.500 1.500v13M2.500 3l8 11.500M13.500 3l-8 11.500M5.500 1.500l8 11.500M10.500 1.500l-8 11.500"/></g></svg>
<svg class="abs" style="left:196.7px;top:490.0px;opacity:1" width="16" height="16" viewBox="0 0 16 16"><defs><linearGradient id="dcb" x1="0" x2="1"><stop offset="0" stop-color="#9cc4f0"/><stop offset=".35" stop-color="#f6fbff"/><stop offset="1" stop-color="#8cb8ea"/></linearGradient></defs><path d="M2 3v10.500a6 2 0 0 0 12 0v-10.500z" fill="url(#dcb)"/><ellipse cx="8" cy="3" rx="6" ry="1.900" fill="#e8f3ff"/></svg>
<svg class="abs" style="left:232.8px;top:490.0px;opacity:1" width="16" height="16" viewBox="0 0 16 16"><path d="M2.500 2.500h10v12h-10z" fill="none" stroke="#7a5a3a" stroke-width=".6"/><path d="M5.500 2l7 0l-5 13l-5.500 0z" fill="#c82828"/><path d="M5.500 2l7 0l-1 2l-7 0z" fill="#e04040"/></svg>
<svg class="abs" style="left:268.8px;top:490.0px;opacity:1" width="16" height="16" viewBox="0 0 16 16"><circle cx="8" cy="8" r="6.800" fill="none" stroke="#c8c8c8" stroke-width="1.600" stroke-dasharray="1.200 1"/><path d="M4 4.500l2.500 1l1.500-1.500l1.500 1.500l2.500-1l-.5 3l1 2l-1.500 2.500l-2-1.500l-1 .8l-1-.8l-2 1.500l-1.500-2.500l1-2z" fill="#3a5a4a" stroke="#3aba3a" stroke-width=".9"/></svg>
<svg class="abs" style="left:336px;top:1px" width="26" height="12" viewBox="0 0 26 12"><path d="M1 4.500h3.500v-3.500M11 4.500h-3.500v-3.500M1 7.500h3.500v3.500M11 7.500h-3.500v3.500" fill="none" stroke="#e8e8e8" stroke-width="1.200"/><path d="M19 3l6 6M25 3l-6 6" stroke="#f0f0f0" stroke-width="1.700"/></svg>
<svg class="abs" style="left:0;top:468px" width="7" height="12" viewBox="0 0 7 12"><path d="M4.500 1q-2 1.500 0 3M4.500 7q-2 1.500 0 3" fill="none" stroke="#6a6a6a" stroke-width=".9"/></svg>
<!--DI-E--></div>

</div>
<div id="bot" class="abs"></div>
<div id="sb" class="abs"></div>
<!--NOTIF-S--><!-- app icons -->
<svg class="abs" style="left:0;top:-1px" width="20" height="20" viewBox="0 0 20 20"><defs><radialGradient id="sph" cx=".38" cy=".4" r=".65"><stop offset="0" stop-color="#f2f2f2"/><stop offset=".6" stop-color="#d0d0d0"/><stop offset="1" stop-color="#808080"/></radialGradient></defs><circle cx="10" cy="10" r="7.600" fill="url(#sph)"/><path d="M6 10.200q3.500-4.500 11.200-2.800q-1.200 4-5.500 4.600q-3.500 .3-5.700-1.800z" fill="#151515"/><ellipse cx="10.600" cy="9.600" rx="2.600" ry="1.700" fill="#5cb85c" transform="rotate(-12 10.6 9.6)"/><ellipse cx="12.700" cy="9.500" rx="1.200" ry="1" fill="#f4f4f4" transform="rotate(-12 12.7 9.5)"/><path d="M9 5.500q4-2 8.200 1.500" fill="none" stroke="#777" stroke-width=".8"/></svg>
<svg class="abs" style="left:-5.800px;top:26.700px" width="16.800" height="16.800" viewBox="0 0 20 20"><circle cx="10" cy="10" r="7.600" fill="url(#sph)"/><path d="M6 10.200q3.500-4.500 11.200-2.800q-1.200 4-5.500 4.600q-3.500 .3-5.700-1.800z" fill="#151515"/><ellipse cx="10.600" cy="9.600" rx="2.600" ry="1.700" fill="#5cb85c" transform="rotate(-12 10.6 9.6)"/><ellipse cx="12.700" cy="9.500" rx="1.200" ry="1" fill="#f4f4f4" transform="rotate(-12 12.7 9.5)"/><path d="M9 5.500q4-2 8.200 1.500" fill="none" stroke="#777" stroke-width=".8"/></svg>
<!-- window controls -->
<svg class="abs" style="left:1800px;top:0" width="114" height="20" viewBox="1800 0 114 20"><path d="M1808.500 10.500l3.500-5l3.500 5z" fill="#7e8487"/><rect x="1836" y="8.200" width="6" height="1.600" fill="#7e8487"/><path d="M1871 4.500l3.500 4l-3.500 4l-3.500-4z" fill="#3c4245"/><circle cx="1903" cy="9" r="7" fill="#7b7f82"/><path d="M1900 6l6 6M1906 6l-6 6" stroke="#13181b" stroke-width="1.600"/></svg>
<!-- mdi close -->
<svg class="abs" style="left:1899px;top:25px" width="12" height="12" viewBox="0 0 12 12"><path d="M2.500 2.500l7 7M9.500 2.500l-7 7" stroke="#fff" stroke-width="1.800"/></svg>
<!-- notification -->
<div class="abs" style="left:1684px;top:11px;width:217px;height:76px;border-radius:6px;background:linear-gradient(#e8e9e9 0,#e9eaea 12px,#ececec 12px,#ededed 38px,#f0f0f0 38px,#eee 100%);box-shadow:0 1px 3px rgba(0,0,0,.5)"></div><svg class="abs" style="left:1860px;top:20px" width="40" height="22" viewBox="1860 20 40 22"><g fill="none" stroke="#fff" stroke-opacity=".75" stroke-width="1.300"><path d="M1866 28.500l4.500 4l4.500-4"/><path d="M1883 29.500h3.300v-3.500M1893 29.500h-3.300v-3.500M1883 32.500h3.300v3.500M1893 32.500h-3.300v3.500"/></g></svg><svg class="abs" style="left:1884px;top:56px" width="17" height="22" viewBox="1884 56 17 22"><circle cx="1894.300" cy="66.800" r="6.200" fill="none" stroke="#fff" stroke-opacity=".8" stroke-width="1.600"/></svg>
<svg class="abs" style="left:1702px;top:28.8px" width="40" height="40" viewBox="0 0 40 40"><circle cx="20" cy="20" r="19.9" fill="#743a82"/><path d="M33.9 11.200Q33.500 20 28.600 25.300Q25 27.500 20 28.500Q15 30 12 32.700Q14 28 18 26Q24 22 25.100 16.900Q30 15 33.900 11.200Z" fill="#e0266f"/><path d="M23.500 6.500Q26 14 24.500 19Q22 23 17 26Q13.500 28.500 11.800 32.700Q13 26 17 16Q22 12 23.500 6.500Z" fill="#ed802c"/><path d="M13.400 8.300Q14.500 12 17 15L17 21Q14 27 11.500 32.700Q6 25 9 20Q13 14 13.400 8.300Z" fill="#ecd04a"/></svg>
<div class="abs" style="left:1760px;top:28px;font-size:14px;font-weight:bold;line-height:18px;color:#232629">Flameshot Info</div>
<div class="abs" style="left:1760px;top:52px;font-size:14px;line-height:18px;color:#2a2e32">Screenshot aborted.</div>
<!--NOTIF-E-->
</body></html>
